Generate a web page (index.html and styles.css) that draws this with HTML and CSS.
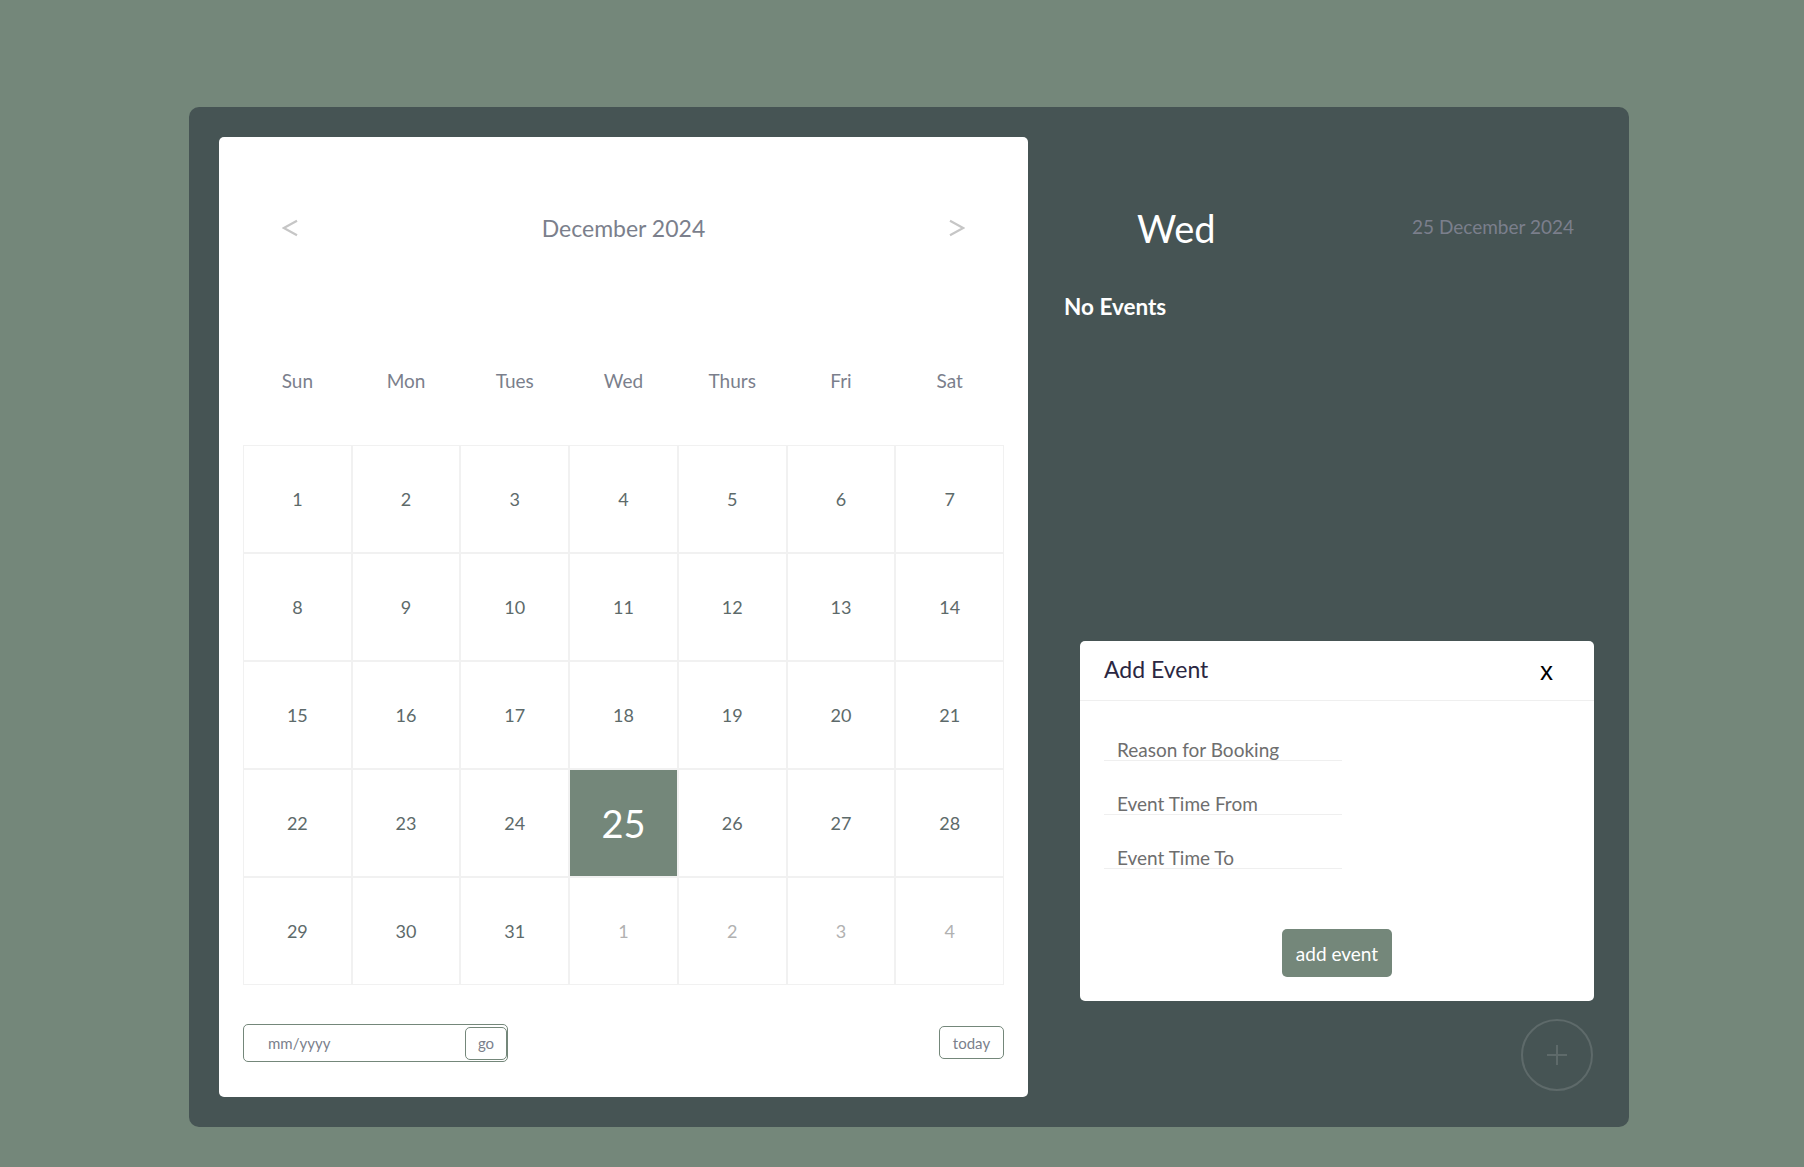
FILE: index.html
```html
<!DOCTYPE html>
<html lang="en">
<head>
<meta charset="utf-8">
<title>Calendar</title>
<link rel="stylesheet" href="styles.css">
</head>
<body>
<div class="app">
  <section class="calendar">
    <div class="month-bar">
      <span class="arrow" aria-label="previous"><svg width="16" height="18" viewBox="0 0 16 18"><polyline points="15,1.8 1.8,9 15,16.2" fill="none" stroke="currentColor" stroke-width="2.2"/></svg></span>
      <span class="month">December 2024</span>
      <span class="arrow" aria-label="next"><svg width="16" height="18" viewBox="0 0 16 18"><polyline points="1,1.8 14.2,9 1,16.2" fill="none" stroke="currentColor" stroke-width="2.2"/></svg></span>
    </div>
    <div class="weekdays">
      <span>Sun</span><span>Mon</span><span>Tues</span><span>Wed</span><span>Thurs</span><span>Fri</span><span>Sat</span>
    </div>
    <div class="days">
      <div class="day">1</div><div class="day">2</div><div class="day">3</div><div class="day">4</div><div class="day">5</div><div class="day">6</div><div class="day">7</div>
      <div class="day">8</div><div class="day">9</div><div class="day">10</div><div class="day">11</div><div class="day">12</div><div class="day">13</div><div class="day">14</div>
      <div class="day">15</div><div class="day">16</div><div class="day">17</div><div class="day">18</div><div class="day">19</div><div class="day">20</div><div class="day">21</div>
      <div class="day">22</div><div class="day">23</div><div class="day">24</div><div class="day active">25</div><div class="day">26</div><div class="day">27</div><div class="day">28</div>
      <div class="day">29</div><div class="day">30</div><div class="day">31</div><div class="day next">1</div><div class="day next">2</div><div class="day next">3</div><div class="day next">4</div>
    </div>
    <div class="goto-bar">
      <div class="goto">
        <input class="goto-input" type="text" placeholder="mm/yyyy">
        <button class="go-btn">go</button>
      </div>
      <button class="today-btn">today</button>
    </div>
  </section>
  <section class="side">
    <div class="day-head">
      <span class="day-name">Wed</span>
      <span class="day-date">25 December 2024</span>
    </div>
    <div class="no-events">No Events</div>
    <div class="add-panel">
      <div class="panel-head">
        <span class="panel-title">Add Event</span>
        <span class="panel-close">x</span>
      </div>
      <div class="panel-body">
        <input class="field" type="text" placeholder="Reason for Booking">
        <input class="field" type="text" placeholder="Event Time From">
        <input class="field" type="text" placeholder="Event Time To">
        <div class="panel-actions">
          <button class="add-btn">add event</button>
        </div>
      </div>
    </div>
    <button class="fab" aria-label="add">
      <svg width="26" height="26" viewBox="0 0 26 26"><path d="M13 3v20M3 13h20" stroke="currentColor" stroke-width="2" fill="none"/></svg>
    </button>
  </section>
</div>
</body>
</html>
```
FILE: styles.css
```css
* { box-sizing: border-box; }
body {
  margin: 0;
  background: #74877a;
  font-family: Lato, "Open Sans", sans-serif;
  min-height: 1167px;
}
.app {
  margin: 107px 0 0 189px;
  width: 1440px;
  height: 1020px;
  padding: 30px;
  background: #465454;
  border-radius: 10px;
  display: flex;
}
.calendar {
  flex: 0 0 809px;
  background: #fff;
  border-radius: 5px;
  padding: 0 24px;
  display: flex;
  flex-direction: column;
}
.month-bar {
  margin-top: 71px;
  height: 40px;
  padding: 0 39px;
  display: flex;
  align-items: center;
  justify-content: space-between;
}
.arrow {
  display: flex;
  color: #c6c6c6;
}
.month {
  font-size: 23px;
  color: #7b7f8c;
  line-height: 40px;
}
.weekdays {
  margin-top: 118px;
  display: grid;
  grid-template-columns: repeat(7, 1fr);
  line-height: 30px;
  text-align: center;
  font-size: 19px;
  color: #7b7f8c;
}
.days {
  margin-top: 49px;
  display: grid;
  grid-template-columns: repeat(7, 1fr);
  grid-auto-rows: 108px;
}
.day {
  border: 1px solid #f1f1f1;
  display: flex;
  align-items: center;
  justify-content: center;
  font-size: 18px;
  color: #5d6a6a;
}
.day.next { color: #b1b1b1; }
.day.active {
  background: #74877a;
  color: #fff;
  font-size: 38px;
}
.goto-bar {
  margin-top: 39px;
  display: flex;
  justify-content: space-between;
  align-items: flex-start;
}
.goto {
  width: 265px;
  height: 38px;
  border: 1px solid #74877a;
  border-radius: 5px;
  display: flex;
  align-items: center;
  padding: 0 0 0 24px;
}
.goto-input {
  flex: 1;
  min-width: 0;
  border: none;
  outline: none;
  font-family: Lato, sans-serif;
  font-size: 15px;
  color: #7b7f8c;
  padding: 0;
  background: transparent;
}
.goto-input::placeholder { color: #7b7f8c; }
.go-btn {
  width: 42px;
  height: 33px;
  border: 1px solid #74877a;
  border-radius: 5px;
  background: #fff;
  font-family: Lato, sans-serif;
  font-size: 15px;
  color: #7b7f8c;
  padding: 0;
}
.today-btn {
  margin-top: 2px;
  width: 65px;
  height: 33px;
  border: 1px solid #74877a;
  border-radius: 5px;
  background: #fff;
  font-family: Lato, sans-serif;
  font-size: 15px;
  color: #7b7f8c;
  padding: 0;
}
.side {
  flex: 1;
  padding: 0 5px 0 36px;
  display: flex;
  flex-direction: column;
}
.day-head {
  margin-top: 67px;
  height: 48px;
  display: flex;
  align-items: center;
}
.day-name {
  margin-left: 73px;
  font-size: 38px;
  color: #fff;
}
.day-date {
  margin-left: auto;
  margin-right: 20px;
  margin-bottom: 4px;
  font-size: 19px;
  color: #7b7f8c;
}
.no-events {
  margin-top: 40px;
  line-height: 30px;
  font-size: 22.5px;
  font-weight: 700;
  color: #fff;
}
.add-panel {
  margin-top: 319px;
  margin-left: 16px;
  background: #fff;
  border-radius: 5px;
}
.panel-head {
  height: 60px;
  border-bottom: 1px solid #efefef;
  display: flex;
  align-items: center;
  justify-content: space-between;
  padding: 0 41px 0 24px;
}
.panel-title {
  font-size: 23px;
  color: #2b2742;
  margin-top: -4px;
}
.panel-close {
  font-family: "Liberation Sans", Arial, sans-serif;
  font-size: 26px;
  color: #000;
  margin-top: 2px;
}
.panel-body {
  padding: 23px 24px 24px;
}
.field {
  display: block;
  width: 238px;
  height: 37px;
  margin-bottom: 17px;
  border: none;
  border-bottom: 1px solid #efefef;
  outline: none;
  padding: 14px 13px 0;
  font-family: Lato, sans-serif;
  font-size: 19px;
  color: #6a6a6a;
  background: transparent;
}
.field::placeholder { color: #6e6e6e; }
.panel-actions {
  margin-top: 60px;
  display: flex;
  justify-content: center;
}
.add-btn {
  height: 48px;
  padding: 0 14px;
  border: none;
  border-radius: 5px;
  background: #74877a;
  color: #fff;
  font-family: Lato, sans-serif;
  font-size: 19px;
}
.fab {
  margin-top: 18px;
  margin-right: 1px;
  align-self: flex-end;
  width: 72px;
  height: 72px;
  border-radius: 50%;
  border: 2px solid #5e6a6a;
  background: transparent;
  color: #5e6a6a;
  display: flex;
  align-items: center;
  justify-content: center;
  padding: 0;
}
```
